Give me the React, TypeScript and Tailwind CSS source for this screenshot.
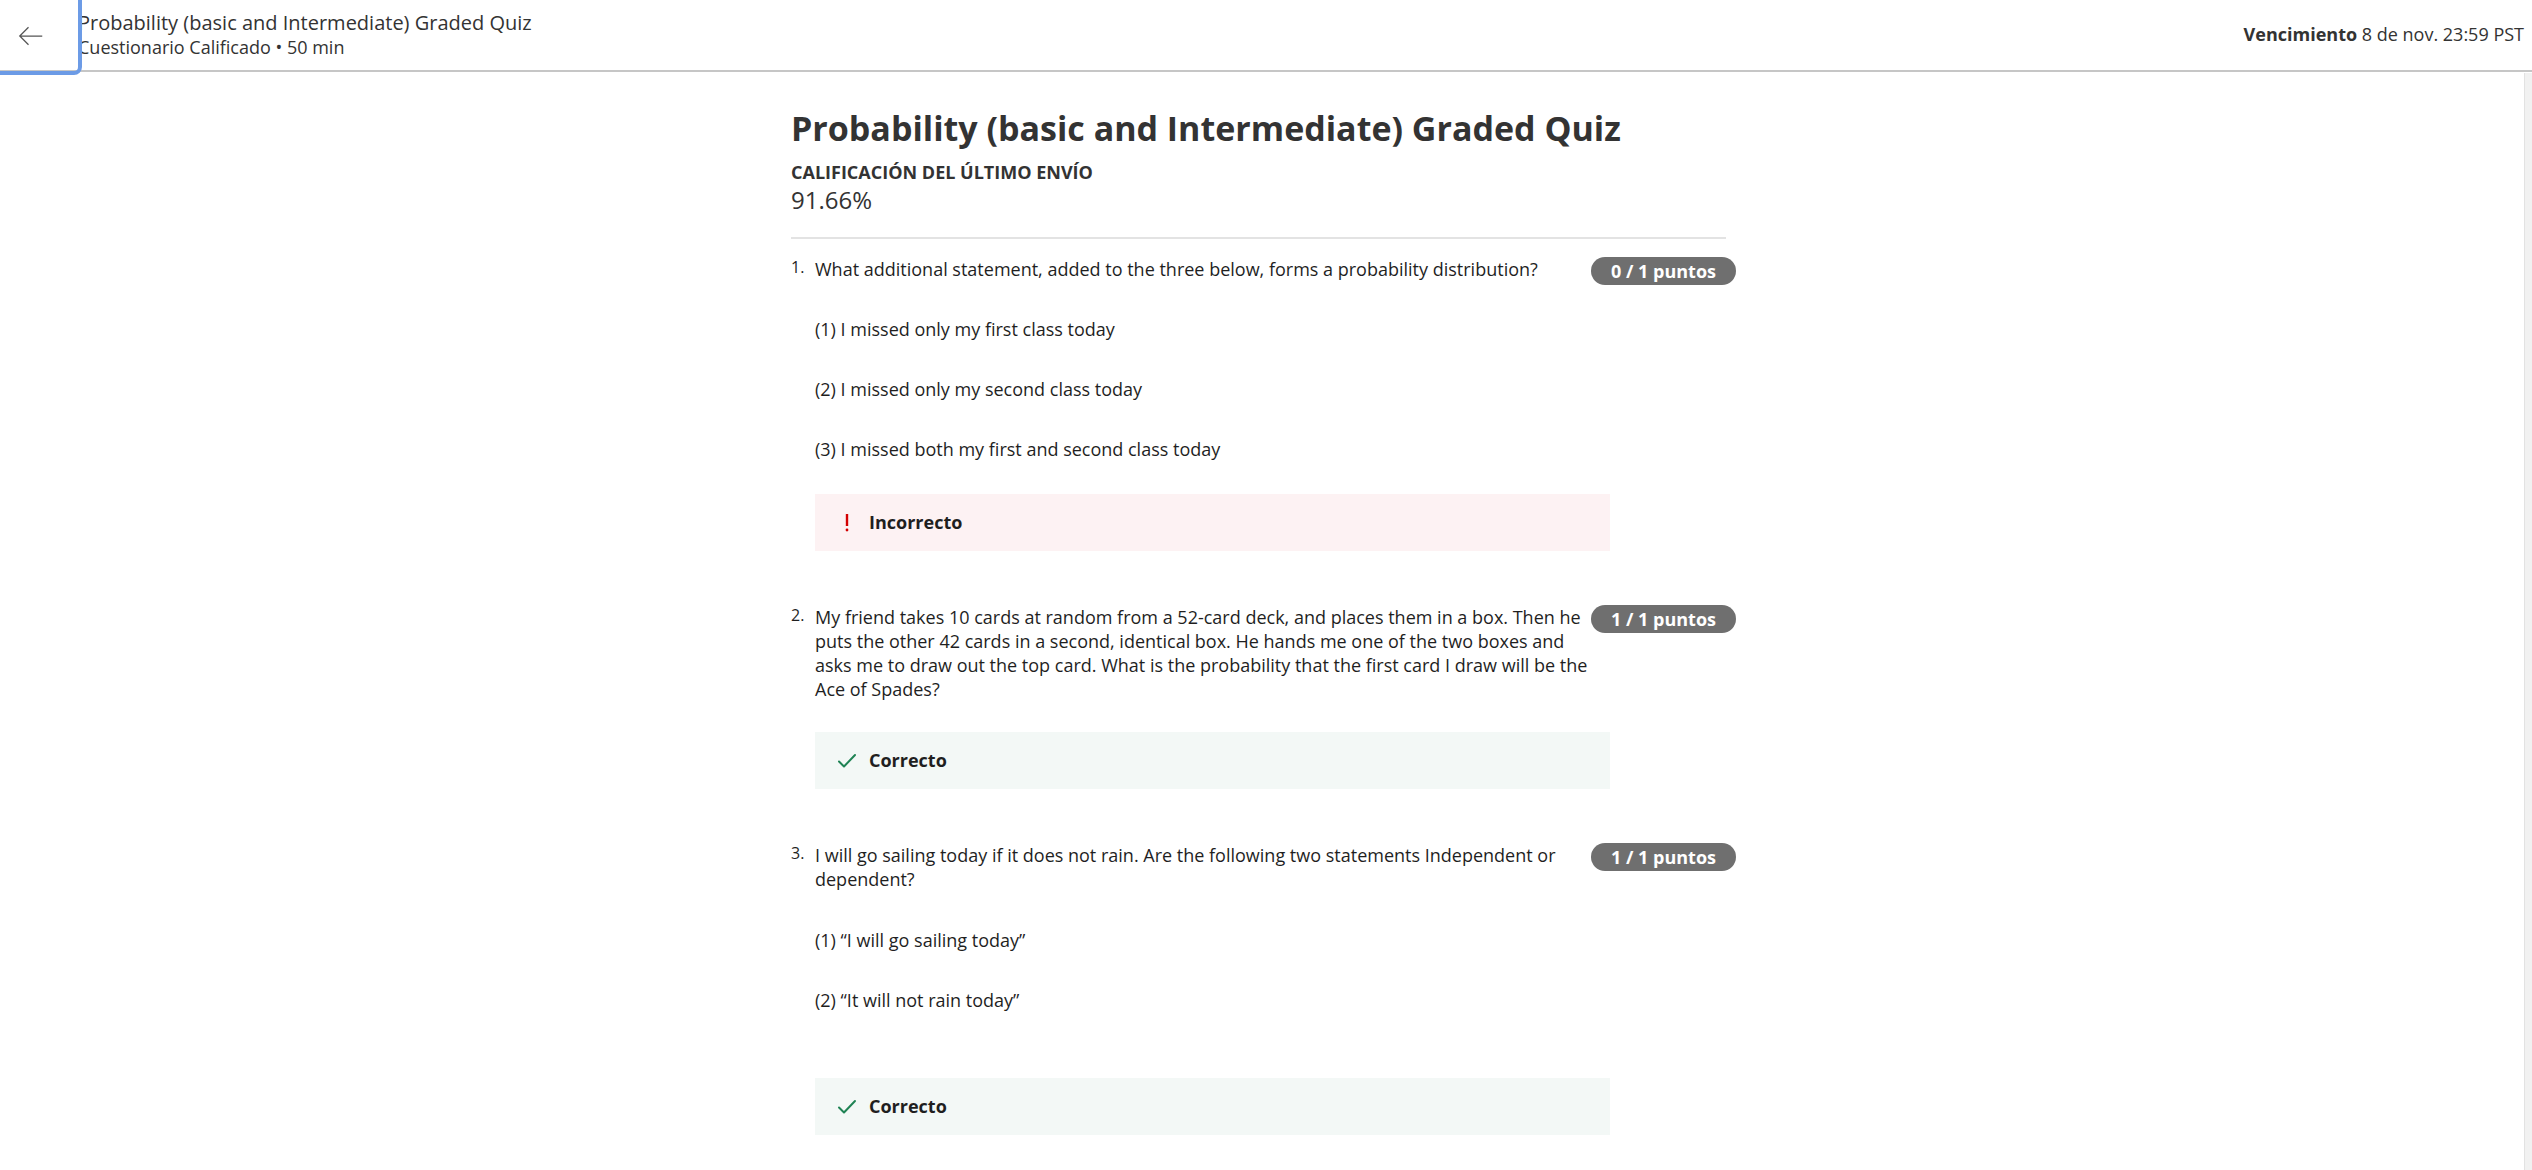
import React from 'react';

function Badge({ text }: { text: string }) {
  return (
    <div className="shrink-0 w-[145px] h-[28px] rounded-full bg-[#6f6f6f] text-white text-[18px] font-bold flex items-center justify-center leading-none">
      {text}
    </div>
  );
}

function Feedback({ ok }: { ok: boolean }) {
  return (
    <div className={`w-[795px] h-[57px] flex items-center pl-[22px] gap-[12px] ${ok ? 'bg-[#f3f8f6]' : 'bg-[#fdf2f3]'}`}>
      {ok ? (
        <svg width="20" height="20" viewBox="0 0 20 20" fill="none">
          <path d="M2 10.5l5 5L18 4" stroke="#1f8354" strokeWidth="2" strokeLinecap="round" strokeLinejoin="round" />
        </svg>
      ) : (
        <svg width="20" height="20" viewBox="0 0 20 20" fill="none">
          <path d="M10 1v12" stroke="#d30001" strokeWidth="2.4" />
          <circle cx="10" cy="17" r="1.4" fill="#d30001" />
        </svg>
      )}
      <span className="text-[18px] font-bold text-[#1f1f1f]">{ok ? 'Correcto' : 'Incorrecto'}</span>
    </div>
  );
}

function Question({ n, text, points, children }: { n: number; text: string; points: string; children?: React.ReactNode }) {
  return (
    <div className="flex">
      <div className="w-[24px] shrink-0 text-[16px] leading-[24px] -mt-[2px]">{n}.</div>
      <div className="flex-1">
        <div className="flex items-start">
          <p className="flex-1 pr-[2px] text-[18px] leading-[24px]">{text}</p>
          <Badge text={points} />
        </div>
        {children}
      </div>
    </div>
  );
}

export default function App() {
  return (
    <div className="min-h-screen bg-white text-[#1f1f1f] font-['Open_Sans',sans-serif] relative">
      {/* cabecera */}
      <header className="h-[72px] border-b-[2px] border-[#c6c6c6] flex items-start">
        <button className="w-[78px] h-[71px] shrink-0 flex items-center justify-center outline-[4px] outline outline-[#6c9be6] rounded-br-[4px] relative z-10">
          <svg width="30" height="30" viewBox="0 0 24 24" fill="none" className="-ml-[16px] mt-[1px]">
            <path d="M21 12H3.5M10 5l-7 7 7 7" stroke="#555" strokeWidth="1" />
          </svg>
        </button>
        <div className="pt-[11px] leading-[24px]">
          <div className="text-[20px] text-[#333]">Probability (basic and Intermediate) Graded Quiz</div>
          <div className="text-[18px] text-[#333]">Cuestionario Calificado • 50 min</div>
        </div>
        <div className="ml-auto pr-[8px] pt-[22px] text-[18px] leading-[24px] text-[#333]">
          <b className="font-bold">Vencimiento</b> 8 de nov. 23:59 PST
        </div>
      </header>

      <div className="absolute right-0 top-[73px] bottom-0 w-[8px] bg-[#f1f1f1] border-l border-[#e2e2e2]" />

      <main className="w-[950px] mx-auto pr-[5px] pt-[32px] pb-[60px]">
        <h1 className="text-[34px] font-bold leading-[48px] text-[#333]">Probability (basic and Intermediate) Graded Quiz</h1>
        <div className="mt-[8px] text-[18px] font-bold leading-[24px] text-[#333]">CALIFICACIÓN DEL ÚLTIMO ENVÍO</div>
        <div className="text-[24px] leading-[32px] text-[#333]">91.66%</div>
        <div className="mt-[21px] w-[935px] h-[2px] bg-[#e3e3e3]" />

        <div className="mt-[18px]">
          <Question n={1} points="0 / 1 puntos" text="What additional statement, added to the three below, forms a probability distribution?">
            <div className="mt-[32px] flex flex-col gap-[36px] text-[18px] leading-[24px]">
              <p>(1) I missed only my first class today</p>
              <p>(2) I missed only my second class today</p>
              <p>(3) I missed both my first and second class today</p>
            </div>
            <div className="mt-[33px]"><Feedback ok={false} /></div>
          </Question>
        </div>

        <div className="mt-[54px]">
          <Question n={2} points="1 / 1 puntos" text="My friend takes 10 cards at random from a 52-card deck, and places them in a box. Then he puts the other 42 cards in a second, identical box. He hands me one of the two boxes and asks me to draw out the top card. What is the probability that the first card I draw will be the Ace of Spades?">
            <div className="mt-[31px]"><Feedback ok /></div>
          </Question>
        </div>

        <div className="mt-[54px]">
          <Question n={3} points="1 / 1 puntos" text="I will go sailing today if it does not rain. Are the following two statements Independent or dependent?">
            <div className="mt-[37px] flex flex-col gap-[36px] text-[18px] leading-[24px]">
              <p>(1) “I will go sailing today”</p>
              <p>(2) “It will not rain today”</p>
            </div>
            <div className="mt-[66px]"><Feedback ok /></div>
          </Question>
        </div>
      </main>
    </div>
  );
}
